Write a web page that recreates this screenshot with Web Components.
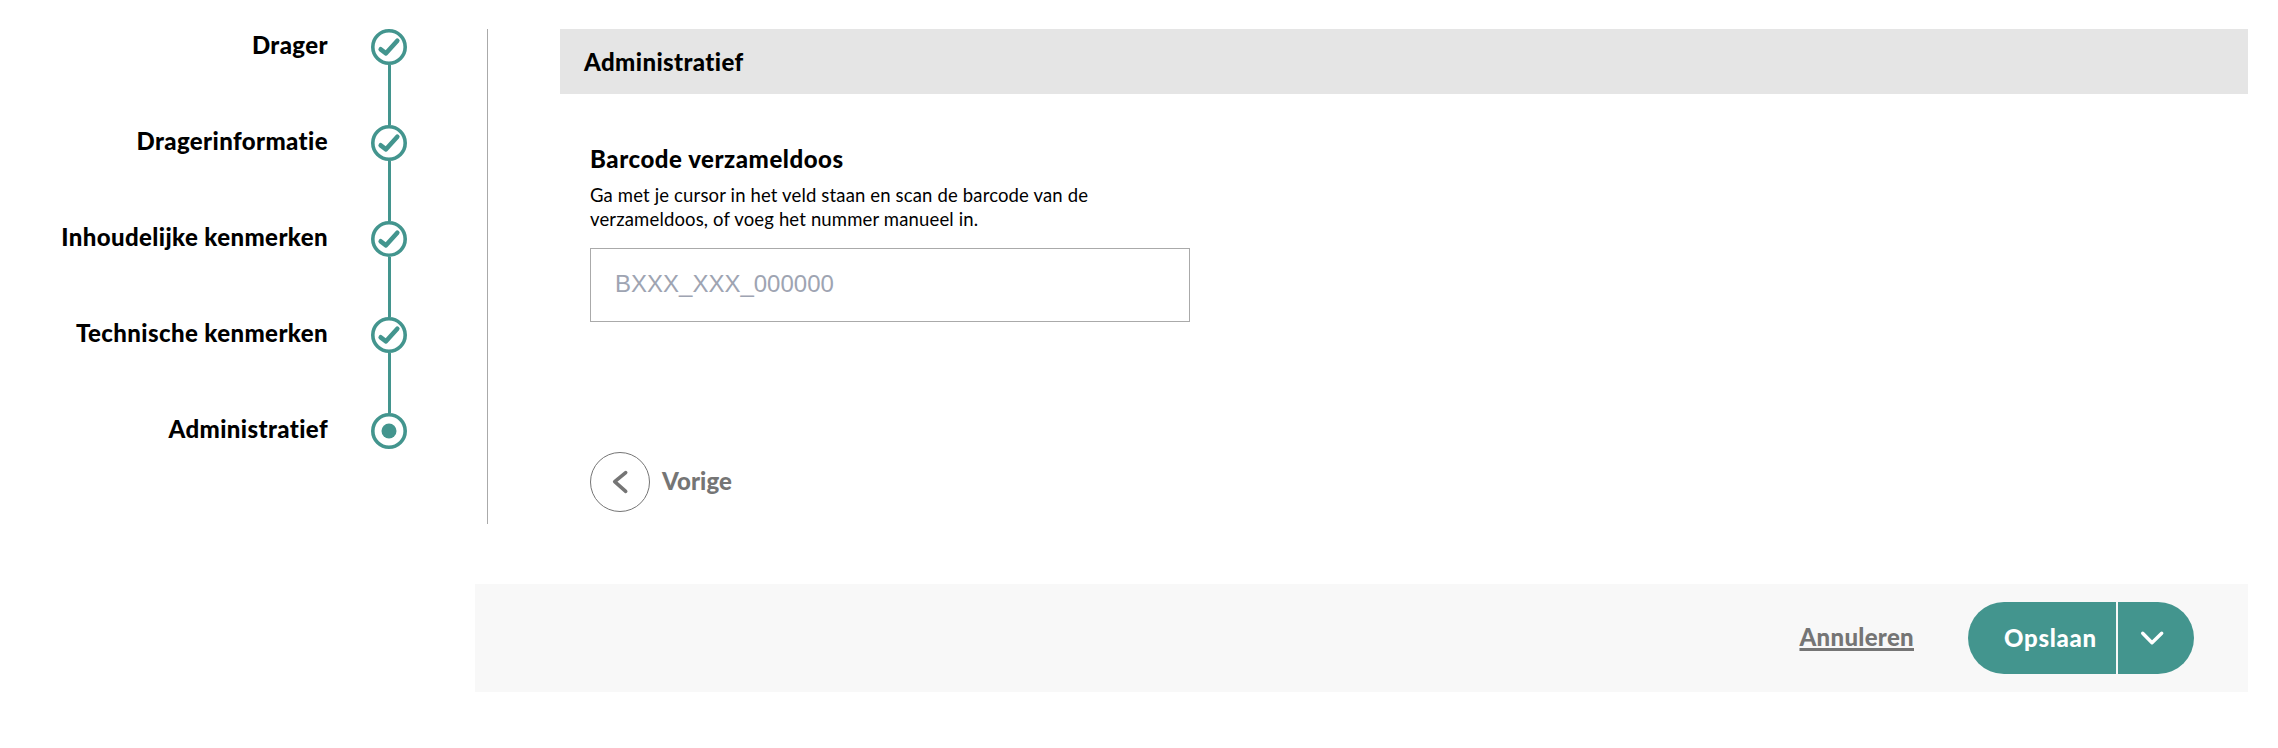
<!doctype html>
<html lang="nl">
<head>
<meta charset="utf-8">
<title>Administratief</title>
<style>
  html, body { margin: 0; background: #fff; }
  body { font-family: "Lato", "Liberation Sans", sans-serif; color: #000; }
</style>
</head>
<body>
<drager-wizard>
  <wizard-stepper slot="steps">
    <wizard-step state="done">Drager</wizard-step>
    <wizard-step state="done">Dragerinformatie</wizard-step>
    <wizard-step state="done">Inhoudelijke kenmerken</wizard-step>
    <wizard-step state="done">Technische kenmerken</wizard-step>
    <wizard-step state="current" last>Administratief</wizard-step>
  </wizard-stepper>
  <section-bar slot="main">Administratief</section-bar>
  <barcode-field slot="main" label="Barcode verzameldoos" placeholder="BXXX_XXX_000000">
    Ga met je cursor in het veld staan en scan de barcode van de<br>verzameldoos, of voeg het nummer manueel in.
  </barcode-field>
  <back-button slot="main">Vorige</back-button>
  <form-footer slot="footer">
    <split-button>Opslaan</split-button>
  </form-footer>
</drager-wizard>

<script>
function define(name, html, Base = HTMLElement) {
  customElements.define(name, class extends Base {
    constructor() {
      super();
      this.attachShadow({ mode: "open" }).innerHTML = typeof html == 'function' ? html(this) : html;
    }
  });
}

define('drager-wizard', /*html*/`
<style>
  :host { display: block; padding: 29px 30px 0 0; }
  #top { display: flex; height: 495px; }
  #steps { flex: none; width: 487px; box-sizing: content-box; border-right: 1px solid #aaa; }
  #main { flex: 1; margin-left: 72px; min-width: 0; }
  #footer { margin: 60px 0 0 475px; }
</style>
<div id="top">
  <div id="steps"><slot name="steps"></slot></div>
  <div id="main"><slot name="main"></slot></div>
</div>
<div id="footer"><slot name="footer"></slot></div>
`);

define('wizard-stepper', /*html*/`
<style>
  :host { display: flex; flex-direction: column; align-items: flex-end; padding-right: 80px; }
</style>
<slot></slot>
`);

const CHECK = `<path d="M9.7 20.3 L15 24.3 L26.3 11.7" fill="none" stroke="#43958e" stroke-width="4.6" stroke-linecap="round" stroke-linejoin="round"/>`;
const DOT = `<circle cx="18" cy="18" r="7.5" fill="#43958e"/>`;

define('wizard-step', el => /*html*/`
<style>
  :host { display: flex; justify-content: flex-end; gap: 43px; height: 96px; }
  #label {
    font: 900 24px/32px "Lato", "Liberation Sans", sans-serif;
    letter-spacing: .4px;
    white-space: nowrap;
    color: #000;
  }
  #node { display: flex; flex-direction: column; align-items: center; width: 36px; }
  svg { display: block; flex: none; }
  #line { width: 3px; height: 60px; background: #43958e; }
</style>
<div id="label"><slot></slot></div>
<div id="node">
  <svg width="36" height="36" viewBox="0 0 36 36">
    <circle cx="18" cy="18" r="16.2" fill="#fff" stroke="#43958e" stroke-width="3.6"/>
    ${el.getAttribute('state') == 'current' ? DOT : CHECK}
  </svg>
  ${el.hasAttribute('last') ? '' : '<div id="line"></div>'}
</div>
`);

define('section-bar', /*html*/`
<style>
  :host {
    display: flex;
    align-items: center;
    height: 65px;
    padding-left: 24px;
    background: #e5e5e5;
    font: 900 24px/32px "Lato", "Liberation Sans", sans-serif;
    letter-spacing: .4px;
  }
</style>
<slot></slot>
`);

define('barcode-field', el => /*html*/`
<style>
  :host { display: block; padding: 50px 0 0 30px; }
  #label { font: 900 24px/30px "Lato", "Liberation Sans", sans-serif; letter-spacing: .55px; }
  #help {
    margin-top: 9px;
    height: 50px;
    font: 400 18.5px/24px "Lato", "Liberation Sans", sans-serif;
    letter-spacing: .15px;
    white-space: nowrap;
  }
  input {
    display: block;
    box-sizing: border-box;
    width: 600px;
    height: 74px;
    margin-top: 15px;
    padding: 0 24px 2px;
    border: 1.5px solid #aaa;
    border-radius: 0;
    outline: none;
    background: #fff;
    font: 400 24px "Liberation Sans", Arial, sans-serif;
  }
  input::placeholder { color: #9ea4b2; opacity: 1; }
</style>
<div id="label">${el.getAttribute('label')}</div>
<div id="help"><slot></slot></div>
<input type="text" placeholder="${el.getAttribute('placeholder')}">
`);

define('back-button', /*html*/`
<style>
  :host { display: flex; align-items: center; gap: 12px; margin: 130px 0 0 30px; color: #757575; }
  #circle {
    display: flex; flex: none; box-sizing: border-box;
    width: 60px; height: 60px;
    border: 1px solid #757575; border-radius: 50%;
  }
  #label { font: 900 24px/28px "Lato", "Liberation Sans", sans-serif; padding-bottom: 2px; letter-spacing: .1px; }
</style>
<div id="circle">
  <svg width="58" height="58" viewBox="1 1 58 58">
    <path d="M35.7 20.7 L24.7 29.7 L35.7 39.3" fill="none" stroke="#757575" stroke-width="3.6" stroke-linecap="round" stroke-linejoin="round"/>
  </svg>
</div>
<div id="label"><slot></slot></div>
`);

define('form-footer', /*html*/`
<style>
  :host {
    display: flex;
    justify-content: flex-end;
    align-items: center;
    gap: 54px;
    height: 108px;
    padding-right: 54px;
    background: #f8f8f8;
  }
  a {
    display: block;
    font: 900 24px/30px "Lato", "Liberation Sans", sans-serif;
    padding-bottom: 3px;
    letter-spacing: .3px;
    color: #757575;
    text-decoration: underline;
    text-decoration-thickness: 2.5px;
    text-underline-offset: 2px;
  }
</style>
<a href="#">Annuleren</a>
<slot></slot>
`);

define('split-button', /*html*/`
<style>
  :host { display: flex; gap: 2px; height: 72px; color: #fff; }
  button {
    display: flex; align-items: center; box-sizing: border-box;
    height: 72px; border: 0; margin: 0; padding: 0;
    background: #43958e; color: inherit;
  }
  #save {
    width: 148px; padding-left: 36px;
    border-radius: 36px 0 0 36px;
    font: 900 24px/30px "Lato", "Liberation Sans", sans-serif;
    letter-spacing: .7px;
  }
  #more { width: 76px; border-radius: 0 36px 36px 0; }
  svg { display: block; }
</style>
<button id="save"><slot></slot></button>
<button id="more" aria-label="Meer">
  <svg width="76" height="72" viewBox="0 0 76 72">
    <path d="M24.7 31.3 L34 40.7 L43.7 31.3" fill="none" stroke="#fff" stroke-width="3.4" stroke-linecap="round" stroke-linejoin="round"/>
  </svg>
</button>
`);
</script>
</body>
</html>
